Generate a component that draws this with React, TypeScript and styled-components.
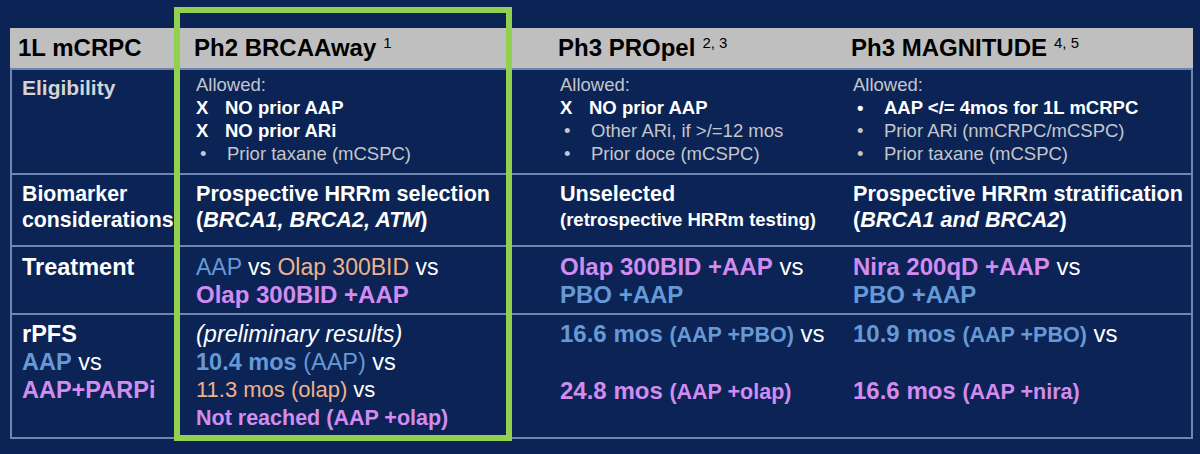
import React from "react";
import styled, { createGlobalStyle } from "styled-components";

const GlobalStyle = createGlobalStyle`
  html, body { margin: 0; padding: 0; background: #0b2455; }
  body { font-family: "Liberation Sans", Arial, sans-serif; }
`;

const C = {
  navy: "#0b2455",
  line: "#6f87ae",
  head: "#bfbfbf",
  blue: "#6699d6",
  orange: "#eeb28a",
  pink: "#d28cf0",
  white: "#ffffff",
  soft: "#d4d4d4",
  gray: "#c4c6cc",
  green: "#92d050",
};

const Slide = styled.div`
  position: relative;
  width: 1200px;
  height: 454px;
  background: ${C.navy};
  padding: 28px 7px 0 10px;
  box-sizing: border-box;
  overflow: hidden;
`;

const Table = styled.div`
  border-left: 2px solid ${C.line};
  border-right: 2px solid ${C.line};
  border-bottom: 2px solid ${C.line};
  width: 1183px;
  box-sizing: border-box;
`;

const Row = styled.div<{ $h: number; $pt: number; $head?: boolean }>`
  display: grid;
  grid-template-columns: 168px 364px 293px 1fr;
  height: ${(p) => p.$h}px;
  box-sizing: border-box;
  padding-top: ${(p) => p.$pt}px;
  background: ${(p) => (p.$head ? C.head : "transparent")};
  border-top: ${(p) => (p.$head ? "none" : `2px solid ${C.line}`)};
  margin-left: ${(p) => (p.$head ? "-2px" : "0")};
  margin-right: ${(p) => (p.$head ? "-2px" : "0")};
`;

const Cell = styled.div<{ $first?: boolean }>`
  padding-left: ${(p) => (p.$first ? "10px" : "16px")};
  min-width: 0;
  white-space: nowrap;
`;

const HeadText = styled.div<{ $first?: boolean }>`
  font-size: 24px;
  font-weight: bold;
  color: #000;
  line-height: 39px;
  padding-left: ${(p) => (p.$first ? "8px" : "0")};
`;

const Sup = styled.sup`
  font-size: 15px;
  font-weight: normal;
  vertical-align: 8px;
  line-height: 0;
  margin-left: 7px;
`;

const Label = styled.div<{ $lh: number; $size: number; $color?: string }>`
  font-size: ${(p) => p.$size}px;
  font-weight: bold;
  line-height: ${(p) => p.$lh}px;
  color: ${(p) => p.$color || C.white};
`;

const Small = styled.div`
  font-size: 18.5px;
  line-height: 22px;
  color: ${C.gray};
`;

const Item = styled.div<{ $bold?: boolean }>`
  display: flex;
  font-size: 18.5px;
  line-height: 23px;
  font-weight: ${(p) => (p.$bold ? "bold" : "normal")};
  color: ${(p) => (p.$bold ? C.white : C.gray)};
`;

const Marker = styled.span<{ $w: number }>`
  width: ${(p) => p.$w}px;
  flex: none;
  padding-left: ${(p) => (p.$w > 29 ? "4px" : "0")};
  box-sizing: border-box;
`;

const Line = styled.div<{ $size: number; $lh: number; $bold?: boolean; $italic?: boolean }>`
  font-size: ${(p) => p.$size}px;
  line-height: ${(p) => p.$lh}px;
  font-weight: ${(p) => (p.$bold ? "bold" : "normal")};
  font-style: ${(p) => (p.$italic ? "italic" : "normal")};
  color: ${C.white};
`;

const Tx = styled.span<{ $c?: string; $bold?: boolean; $size?: number; $italic?: boolean }>`
  color: ${(p) => p.$c || C.white};
  font-weight: ${(p) => (p.$bold === undefined ? "inherit" : p.$bold ? "bold" : "normal")};
  font-size: ${(p) => (p.$size ? `${p.$size}px` : "inherit")};
  font-style: ${(p) => (p.$italic ? "italic" : "inherit")};
`;

const Highlight = styled.div`
  position: absolute;
  left: 174px;
  top: 7px;
  width: 338px;
  height: 434px;
  border: 6px solid ${C.green};
  box-sizing: border-box;
  pointer-events: none;
`;

const X = () => <Marker $w={29}>X</Marker>;
const Dot = () => <Marker $w={31}>•</Marker>;

export default function App() {
  return (
    <>
      <GlobalStyle />
      <Slide>
        <Table>
          <Row $h={40} $pt={0} $head>
            <HeadText $first>1L mCRPC</HeadText>
            <Cell>
              <HeadText>
                Ph2 BRCAAway<Sup>1</Sup>
              </HeadText>
            </Cell>
            <Cell>
              <HeadText>
                Ph3 PROpel<Sup>2, 3</Sup>
              </HeadText>
            </Cell>
            <Cell>
              <HeadText>
                Ph3 MAGNITUDE<Sup>4, 5</Sup>
              </HeadText>
            </Cell>
          </Row>

          <Row $h={105} $pt={4}>
            <Cell $first>
              <Label $lh={28} $size={21} $color={C.soft}>Eligibility</Label>
            </Cell>
            <Cell>
              <Small>Allowed:</Small>
              <Item $bold><X />NO prior AAP</Item>
              <Item $bold><X />NO prior ARi</Item>
              <Item><Dot />Prior taxane (mCSPC)</Item>
            </Cell>
            <Cell>
              <Small>Allowed:</Small>
              <Item $bold><X />NO prior AAP</Item>
              <Item><Dot />Other ARi, if &gt;/=12 mos</Item>
              <Item><Dot />Prior doce (mCSPC)</Item>
            </Cell>
            <Cell>
              <Small>Allowed:</Small>
              <Item $bold><Dot />AAP &lt;/= 4mos for 1L mCRPC</Item>
              <Item><Dot />Prior ARi (nmCRPC/mCSPC)</Item>
              <Item><Dot />Prior taxane (mCSPC)</Item>
            </Cell>
          </Row>

          <Row $h={72} $pt={6}>
            <Cell $first>
              <Label $lh={26} $size={21.3}>Biomarker</Label>
              <Label $lh={26} $size={21.3}>considerations</Label>
            </Cell>
            <Cell>
              <Line $size={21.6} $lh={26} $bold>Prospective HRRm selection</Line>
              <Line $size={21.6} $lh={26} $bold>
                (<Tx $italic>BRCA1, BRCA2, ATM</Tx>)
              </Line>
            </Cell>
            <Cell>
              <Line $size={21.6} $lh={26} $bold>Unselected</Line>
              <Line $size={18.5} $lh={26} $bold>(retrospective HRRm testing)</Line>
            </Cell>
            <Cell>
              <Line $size={21.6} $lh={26} $bold>Prospective HRRm stratification</Line>
              <Line $size={21.6} $lh={26} $bold>
                (<Tx $italic>BRCA1 and BRCA2</Tx>)
              </Line>
            </Cell>
          </Row>

          <Row $h={68} $pt={6}>
            <Cell $first>
              <Label $lh={28} $size={23.5}>Treatment</Label>
            </Cell>
            <Cell>
              <Line $size={23} $lh={28}>
                <Tx $c={C.blue}>AAP</Tx> vs <Tx $c={C.orange}>Olap 300BID</Tx> vs
              </Line>
              <Line $size={24} $lh={28} $bold>
                <Tx $c={C.pink}>Olap 300BID +AAP</Tx>
              </Line>
            </Cell>
            <Cell>
              <Line $size={24} $lh={28}>
                <Tx $c={C.pink} $bold>Olap 300BID +AAP</Tx> vs
              </Line>
              <Line $size={24} $lh={28} $bold>
                <Tx $c={C.blue}>PBO +AAP</Tx>
              </Line>
            </Cell>
            <Cell>
              <Line $size={24} $lh={28}>
                <Tx $c={C.pink} $bold>Nira 200qD +AAP</Tx> vs
              </Line>
              <Line $size={24} $lh={28} $bold>
                <Tx $c={C.blue}>PBO +AAP</Tx>
              </Line>
            </Cell>
          </Row>

          <Row $h={124} $pt={5}>
            <Cell $first>
              <Label $lh={28} $size={23.5}>rPFS</Label>
              <Line $size={23.5} $lh={28}>
                <Tx $c={C.blue} $bold>AAP</Tx> vs
              </Line>
              <Line $size={23.5} $lh={28} $bold>
                <Tx $c={C.pink}>AAP+PARPi</Tx>
              </Line>
            </Cell>
            <Cell>
              <Line $size={23.5} $lh={28} $italic>(preliminary results)</Line>
              <Line $size={23.5} $lh={28}>
                <Tx $c={C.blue} $bold>10.4 mos</Tx> <Tx $c={C.blue}>(AAP)</Tx> vs
              </Line>
              <Line $size={22} $lh={28}>
                <Tx $c={C.orange}>11.3 mos (olap)</Tx> vs
              </Line>
              <Line $size={21.5} $lh={28} $bold>
                <Tx $c={C.pink}>Not reached (AAP +olap)</Tx>
              </Line>
            </Cell>
            <Cell>
              <Line $size={24} $lh={28}>
                <Tx $c={C.blue} $bold>16.6 mos</Tx>{" "}
                <Tx $c={C.blue} $bold $size={21.5}>(AAP +PBO)</Tx> vs
              </Line>
              <Line $size={24} $lh={28}>&nbsp;</Line>
              <Line $size={24} $lh={28}>
                <Tx $c={C.pink} $bold>24.8 mos</Tx>{" "}
                <Tx $c={C.pink} $bold $size={21.5}>(AAP +olap)</Tx>
              </Line>
            </Cell>
            <Cell>
              <Line $size={24} $lh={28}>
                <Tx $c={C.blue} $bold>10.9 mos</Tx>{" "}
                <Tx $c={C.blue} $bold $size={21.5}>(AAP +PBO)</Tx> vs
              </Line>
              <Line $size={24} $lh={28}>&nbsp;</Line>
              <Line $size={24} $lh={28}>
                <Tx $c={C.pink} $bold>16.6 mos</Tx>{" "}
                <Tx $c={C.pink} $bold $size={21.5}>(AAP +nira)</Tx>
              </Line>
            </Cell>
          </Row>
        </Table>
        <Highlight />
      </Slide>
    </>
  );
}
